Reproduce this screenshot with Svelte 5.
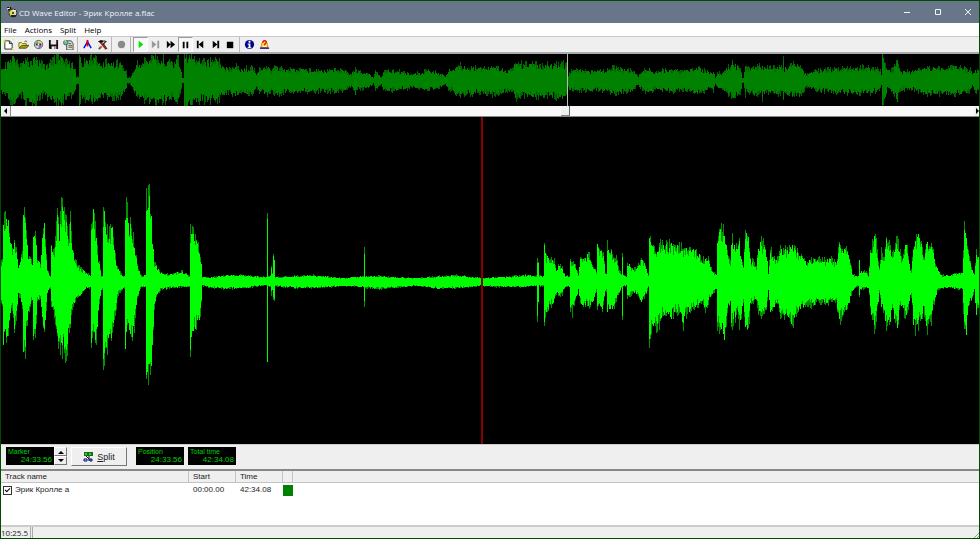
<script lang="ts">
	type Point = [x: number, up: number, down: number];

	const menus = ['File', 'Actions', 'Split', 'Help'];

	const groups = [
		[
			{ id: 'new', label: 'New' },
			{ id: 'open', label: 'Open' },
			{ id: 'cd', label: 'Read CD' },
			{ id: 'save', label: 'Save' },
			{ id: 'export', label: 'Export' }
		],
		[
			{ id: 'split', label: 'Add split' },
			{ id: 'tools', label: 'Tools' }
		],
		[{ id: 'record', label: 'Record' }],
		[
			{ id: 'play', label: 'Play' },
			{ id: 'step', label: 'Play to marker' },
			{ id: 'forward', label: 'Fast forward' },
			{ id: 'pause', label: 'Pause' },
			{ id: 'prev', label: 'Previous' },
			{ id: 'next', label: 'Next' },
			{ id: 'stop', label: 'Stop' }
		],
		[
			{ id: 'info', label: 'Info' },
			{ id: 'help', label: 'Help' }
		]
	];

	const tracks = [{ name: 'Эрик Кролле а', start: '00:00.00', time: '42:34.08' }];

	let pressed = $state(['play', 'pause']);
	let scroll = $state(577);
	let keep = $state([true]);

	// zoomed view: x, peak above the axis, peak below the axis
	const zoomed: Point[] = [
		[0, 19, 18], [2, 22, 22], [3, 58, 61], [5, 68, 60], [8, 62, 60], [9, 44, 40], [12, 34, 29], [14, 42, 46], [16, 33, 35],
		[18, 14, 14], [20, 19, 17], [22, 29, 26], [23, 64, 70], [24, 64, 78], [26, 51, 56], [28, 24, 30], [30, 24, 22], [32, 16, 20],
		[33, 43, 58], [35, 51, 55], [37, 23, 19], [40, 16, 15], [42, 43, 40], [44, 58, 50], [45, 38, 42], [47, 11, 12], [50, 5, 7],
		[51, 36, 22], [54, 31, 36], [57, 67, 70], [59, 46, 60], [61, 75, 70], [64, 70, 73], [66, 64, 75], [68, 44, 56], [70, 61, 44],
		[72, 31, 29], [75, 20, 18], [80, 13, 13], [85, 9, 7], [90, 6, 6], [91, 67, 80], [93, 70, 60], [96, 44, 60], [98, 24, 30],
		[101, 5, 8], [102, 6, 8], [103, 72, 86], [105, 68, 73], [108, 46, 65], [112, 54, 52], [115, 28, 35], [117, 14, 14],
		[122, 5, 7], [124, 5, 6], [125, 69, 72], [126, 80, 60], [127, 80, 49], [129, 54, 49], [131, 57, 60], [134, 38, 45], [137, 17, 15],
		[141, 5, 5], [145, 6, 5], [146, 96, 105], [148, 83, 90], [149, 86, 89], [151, 67, 99], [152, 44, 69], [154, 20, 29],
		[157, 14, 14], [160, 8, 8], [170, 7, 6], [182, 10, 5], [189, 5, 5], [190, 51, 74], [192, 60, 56], [194, 44, 48], [197, 41, 44],
		[200, 24, 34], [201, 21, 22], [202, 4, 4], [212, 4, 6], [226, 6, 7], [245, 6, 6], [266, 4, 3], [267, 68, 88], [268, 5, 5],
		[270, 6, 5], [271, 16, 12], [272, 8, 9], [273, 27, 17], [274, 25, 17], [275, 4, 4], [295, 5, 6], [312, 6, 6], [345, 3, 4],
		[363, 5, 5], [364, 31, 22], [365, 5, 6], [380, 5, 7], [390, 4, 6], [417, 3, 4], [440, 5, 7], [455, 6, 6], [482, 3, 4], [500, 4, 5],
		[525, 6, 5], [536, 5, 4], [537, 23, 40], [538, 18, 25], [539, 5, 4], [543, 5, 4], [544, 38, 45], [546, 25, 30], [548, 28, 27],
		[551, 21, 23], [554, 23, 21], [556, 13, 12], [558, 16, 13], [562, 14, 13], [565, 5, 5], [569, 5, 5], [570, 21, 33], [573, 20, 30],
		[576, 13, 16], [578, 6, 8], [580, 22, 23], [584, 22, 22], [588, 30, 25], [592, 20, 22], [596, 9, 9], [597, 37, 30], [599, 33, 26],
		[601, 30, 28], [603, 28, 27], [605, 9, 10], [606, 8, 9], [607, 38, 30], [610, 32, 28], [613, 25, 26], [616, 23, 20], [618, 13, 12],
		[621, 7, 6], [622, 26, 33], [623, 6, 5], [626, 5, 4], [627, 20, 16], [632, 12, 12], [637, 14, 12], [641, 23, 20], [645, 17, 14],
		[648, 5, 5], [649, 47, 57], [650, 46, 56], [652, 38, 46], [655, 35, 44], [658, 34, 45], [661, 40, 36], [666, 37, 34], [671, 38, 36],
		[676, 34, 30], [680, 37, 30], [683, 32, 44], [687, 32, 30], [692, 35, 28], [697, 29, 24], [702, 22, 20], [705, 24, 30],
		[708, 22, 20], [712, 10, 12], [716, 6, 7], [717, 45, 44], [719, 52, 45], [722, 55, 50], [724, 45, 58], [727, 30, 30],
		[730, 20, 22], [731, 46, 45], [734, 35, 40], [737, 32, 28], [739, 48, 44], [740, 25, 43], [743, 15, 20], [745, 49, 44],
		[748, 43, 48], [750, 22, 25], [754, 20, 18], [756, 14, 18], [758, 33, 30], [761, 40, 33], [765, 35, 33], [767, 22, 20],
		[768, 8, 8], [770, 34, 31], [773, 22, 25], [778, 22, 22], [780, 39, 40], [782, 25, 28], [784, 32, 34], [788, 30, 36],
		[790, 43, 40], [793, 34, 44], [797, 29, 31], [802, 25, 25], [806, 20, 22], [812, 22, 24], [818, 22, 20], [824, 21, 21],
		[830, 22, 21], [836, 18, 20], [839, 38, 40], [842, 30, 34], [845, 33, 32], [848, 28, 26], [850, 20, 15], [852, 7, 10],
		[856, 5, 5], [858, 5, 4], [859, 21, 16], [860, 8, 8], [861, 10, 7], [866, 9, 6], [868, 5, 6], [870, 30, 26], [872, 37, 40], [875, 48, 48],
		[877, 30, 30], [879, 12, 10], [881, 30, 25], [884, 22, 32], [886, 43, 43], [889, 40, 43], [892, 28, 30], [894, 30, 36],
		[897, 43, 46], [900, 30, 26], [902, 22, 25], [905, 38, 35], [907, 35, 30], [910, 12, 15], [911, 10, 15], [913, 40, 45],
		[915, 42, 47], [918, 48, 43], [921, 40, 36], [923, 22, 28], [926, 40, 46], [930, 37, 45], [933, 30, 25], [935, 20, 15],
		[938, 10, 8], [942, 6, 6], [950, 6, 6], [957, 8, 7], [962, 8, 7], [963, 30, 30], [964, 54, 50], [966, 45, 54], [968, 28, 26],
		[971, 14, 18], [974, 6, 8], [976, 28, 32], [979, 25, 20]
	];

	// whole file: x, peak on either side of the axis
	const whole: Point[] = [
		[0, 8], [3, 14], [8, 18], [14, 24], [18, 15], [20, 13], [25, 20], [30, 19], [34, 21], [40, 18], [44, 13], [50, 18], [58, 23],
		[65, 18], [72, 14], [75, 9], [76, 3], [78, 3], [79, 26], [81, 17], [88, 21], [96, 20], [101, 14], [106, 17], [112, 16],
		[120, 16], [126, 8], [127, 2], [130, 3], [133, 8], [137, 16], [145, 18], [152, 23], [158, 20], [165, 20], [172, 17],
		[178, 20], [181, 8], [182, 2], [183, 2], [184, 24], [190, 23], [196, 19], [202, 20], [208, 18], [216, 21], [222, 14],
		[228, 11], [235, 14], [243, 11], [252, 13], [256, 6], [260, 11], [268, 13], [271, 9], [275, 13], [282, 12], [290, 10],
		[300, 11], [310, 10], [318, 10], [325, 10], [335, 11], [345, 9], [351, 5], [354, 11], [355, 14], [356, 9], [365, 7],
		[371, 5], [373, 2], [375, 8], [381, 3], [383, 9], [395, 9], [405, 8], [412, 6], [418, 7], [425, 9], [435, 8], [445, 4],
		[449, 10], [452, 8], [456, 14], [465, 13], [475, 12], [485, 12], [492, 13], [500, 12], [505, 10], [512, 10], [514, 17],
		[525, 15], [540, 15], [550, 15], [560, 16], [566, 16], [567, 1], [569, 8], [575, 10], [585, 10], [595, 9], [605, 10],
		[613, 12], [620, 11], [630, 10], [635, 7], [638, 4], [642, 9], [650, 11], [655, 7], [662, 10], [672, 10], [680, 9],
		[690, 10], [700, 12], [706, 9], [710, 6], [713, 10], [715, 2], [717, 7], [722, 7], [728, 13], [733, 16], [740, 12],
		[742, 2], [743, 2], [745, 13], [750, 11], [756, 13], [761, 13], [762, 19], [763, 12], [782, 12], [783, 20], [784, 12],
		[793, 15], [800, 14], [804, 9], [806, 5], [812, 8], [820, 10], [835, 11], [850, 12], [865, 12], [875, 11], [880, 9],
		[881, 5], [882, 26], [884, 19], [887, 9], [892, 10], [897, 19], [900, 9], [910, 8], [918, 10], [926, 12], [936, 12],
		[945, 12], [950, 13], [962, 12], [970, 10], [972, 5], [975, 10], [979, 11]
	].map(([x, peak]) => [x, peak, peak]);

	function noise(n: number) {
		const v = Math.sin(n * 12.9898) * 43758.5453;
		return v - Math.floor(v);
	}

	// one vertical bar per sample column, each cut by up to `depth` of its height
	function bars(points: Point[], seed: number, gain: number, depth: number) {
		let d = '';
		let i = 0;
		for (let x = 1; x < 979; x++) {
			while (i < points.length - 2 && points[i + 1][0] <= x) i++;
			const [x0, up0, down0] = points[i];
			const [x1, up1, down1] = points[i + 1];
			const t = (x - x0) / (x1 - x0);
			const up = (up0 + (up1 - up0) * t) * (gain - depth * noise(x + seed));
			const down = (down0 + (down1 - down0) * t) * (gain - depth * noise(x + seed + 500));
			d += `M${x}.5 ${-Math.round(up)}V${Math.round(down) + 1}`;
		}
		return d;
	}

	function toggle(id: string) {
		pressed = pressed.includes(id) ? pressed.filter((p) => p !== id) : [...pressed, id];
	}
</script>

{#snippet icon(id: string)}
	<svg viewBox="0 0 12 12" aria-hidden="true">
		{#if id === 'new'}
			<path d="M2 2h5l3 3v6H2z" fill="#fff" stroke="#222" />
			<path d="M7 2v3h3" fill="none" stroke="#222" />
			<path d="M0 1l2 2M3 0v2M0 4h2M10 1l2-1M10 10l2 2" stroke="#ee0" />
		{:else if id === 'open'}
			<path d="M1 9V4h3l1 1h4v2" fill="#f5f078" stroke="#77720a" />
			<path d="M1 10l3-3h8l-3 3z" fill="#a6a01c" stroke="#4d4a00" />
			<path d="M7 3q2-2 3 0" fill="none" stroke="#555" />
		{:else if id === 'cd'}
			<circle cx="6" cy="6" r="4.5" fill="#ddd" stroke="#555" />
			<path d="M2 5q2-3 4-3v3z" fill="#59c659" />
			<path d="M10 7q-1 3-4 3V7z" fill="#9a67d2" />
			<path d="M6 2q3 0 4 3L7 6z" fill="#e6d85c" />
			<path d="M3 6h6" stroke="#222" stroke-width="2" />
			<circle cx="6" cy="6" r="1" fill="#fff" />
		{:else if id === 'save'}
			<path d="M1 1h10v10H2l-1-1z" fill="#111" />
			<path d="M3 1h6v5H3z" fill="#e8e8e8" />
			<path d="M4 8h5v3H4z" fill="#eee" />
			<path d="M7 8h1v3H7zM10 2h1v1h-1z" fill="#a22" />
		{:else if id === 'export'}
			<path d="M4 2h5l2 3v7H4z" fill="#ddd" stroke="#444" />
			<circle cx="3" cy="4" r="2.5" fill="#3ac6c6" stroke="#666" />
			<path d="M1 2l2-1 1 3z" fill="#ed3" />
			<path d="M6 5h3M6 7h4M6 9h4" stroke="#575733" />
			<circle cx="8" cy="8" r="1" fill="#aa3" />
		{:else if id === 'split'}
			<path d="M2 10l4-7 4 7" fill="none" stroke="#0000f0" stroke-width="1.5" />
			<path d="M6 1v7" stroke="#e00000" stroke-width="2" />
		{:else if id === 'tools'}
			<path d="M1 3l3-2 4 1-3 3z" fill="#111" />
			<path d="M4 4l6 7" stroke="#c01818" stroke-width="2" />
			<path d="M8 1l3 2-2 1-2 3-1-1 2-3z" fill="#333" />
			<path d="M2 11l3-3" stroke="#555" stroke-width="2" />
			<path d="M7 5l4 6" stroke="#111" />
			<path d="M2 7l2 2" stroke="#e0d020" />
		{:else if id === 'record'}
			<circle cx="6" cy="6" r="4" fill="#8a8a8a" />
		{:else if id === 'play'}
			<path d="M4 2l5 4-5 4z" fill="#00e400" />
		{:else if id === 'step'}
			<path d="M2 2l5 4-5 4zM8 2h2v8H8z" fill="#999" />
		{:else if id === 'forward'}
			<path d="M2 2l4 4-4 4zM6 2l5 4-5 4z" />
		{:else if id === 'pause'}
			<path d="M3 3h2v7H3zM7 3h2v7H7z" />
		{:else if id === 'prev'}
			<path d="M2 2h2v8H2zM9 2v8L4 6z" />
		{:else if id === 'next'}
			<path d="M8 2h2v8H8zM3 2l5 4-5 4z" />
		{:else if id === 'stop'}
			<path d="M2 3h7v7H2z" />
		{:else if id === 'info'}
			<circle cx="6" cy="6" r="5" fill="#00008b" />
			<path d="M5 2h2v2H5zM4 5h3v4h1v1H4V9h1V6H4z" fill="#fff" />
		{:else if id === 'help'}
			<path d="M2 9q1-1 1-4 1-3 3-3t3 3q0 3 1 4z" fill="#ffe84a" stroke="#d08000" />
			<path d="M1 10h10" stroke="#101090" stroke-width="1.5" />
			<path d="M4 4q1-3 3-2t0 3L6 6v1" fill="none" stroke="#e01010" stroke-width="1.5" />
			<path d="M4 8h4" stroke="#fff" />
		{/if}
	</svg>
{/snippet}

<div class="window">
	<header class="titlebar">
		<svg class="logo" viewBox="0 0 12 12" aria-hidden="true">
			<path d="M1 1h4l1 4-3 1z" fill="#151515" />
			<circle cx="7" cy="7" r="4" fill="#d9d9ac" stroke="#333" />
			<path d="M3 6l4-2 1 3-3 3z" fill="#e6df28" />
			<path d="M5 9h5v2H5z" fill="#222" />
			<circle cx="7" cy="7" r="1" fill="#222" />
			<path d="M1 3l3-1M7 4l3 1" stroke="#fff" />
		</svg>
		<h1>CD Wave Editor - Эрик Кролле a.flac</h1>
		<div class="caption">
			<button type="button" aria-label="Minimize"><svg viewBox="0 0 8 8"><path d="M1 4.5h6" /></svg></button>
			<button type="button" aria-label="Maximize"><svg viewBox="0 0 8 8"><path d="M1.5 1.5h5v5h-5z" /></svg></button>
			<button type="button" aria-label="Close"><svg viewBox="0 0 8 8"><path d="M1 1l6 6M7 1L1 7" /></svg></button>
		</div>
	</header>

	<nav class="menu">
		{#each menus as menu (menu)}
			<button type="button">{menu}</button>
		{/each}
	</nav>

	<div class="toolbar" role="toolbar" aria-label="Main">
		{#each groups as group, i (i)}
			<div class="group">
				{#each group as tool (tool.id)}
					<button
						type="button"
						class:pressed={pressed.includes(tool.id)}
						aria-label={tool.label}
						title={tool.label}
						onclick={() => toggle(tool.id)}
					>
						{@render icon(tool.id)}
					</button>
				{/each}
			</div>
		{/each}
	</div>

	<svg class="overview" viewBox="1 -26 978 52" preserveAspectRatio="none" role="img" aria-label="Whole recording">
		<path d={bars(whole, 7, 1.3, 0.7)} stroke="#006400" />
		<path d={bars(whole, 90, 1.1, 0.45)} stroke="#008200" />
		<path d="M567.5 -26V26" stroke="#b8b8b8" />
	</svg>

	<div class="scrollbar">
		<button type="button" aria-label="Scroll left"><svg viewBox="0 0 8 8"><path d="M5 1v6L2 4z" /></svg></button>
		<input type="range" min="0" max="1000" bind:value={scroll} aria-label="Position in recording" />
		<button type="button" aria-label="Scroll right"><svg viewBox="0 0 8 8"><path d="M3 1v6l3-3z" /></svg></button>
	</div>

	<div class="wave">
		<svg viewBox="1 -164 978 327" preserveAspectRatio="none" role="img" aria-label="Zoomed waveform">
			<path d={bars(zoomed, 3, 1.16, 0.4)} stroke="#009000" />
			<path d={bars(zoomed, 40, 1.03, 0.33)} stroke="#00ff00" />
			<rect x="481" y="-164" width="2" height="327" fill="#880000" />
		</svg>
	</div>

	<div class="controls">
		<div class="spin">
			<div class="readout"><span>Marker</span><output>24:33.56</output></div>
			<div class="arrows">
				<button type="button" aria-label="Marker forward"><svg viewBox="0 0 6 4"><path d="M0 4h6L3 1z" /></svg></button>
				<button type="button" aria-label="Marker back"><svg viewBox="0 0 6 4"><path d="M0 0h6L3 3z" /></svg></button>
			</div>
		</div>
		<button type="button" class="split">
			<svg viewBox="0 0 10 10" aria-hidden="true">
				<path d="M1 0h9v4H1z" fill="#087808" />
				<path d="M2 2h2M6 2h2" stroke="#8f8" />
				<path d="M3 4l4 4M6 4v5" stroke="#111" />
				<path d="M1 7h3v2H1zM7 7h2v2H7z" fill="none" stroke="#000090" />
			</svg>
			<span><u>S</u>plit</span>
		</button>
		<div class="readout"><span>Position</span><output>24:33.56</output></div>
		<div class="readout"><span>Total time</span><output>42:34.08</output></div>
	</div>

	<div class="tracks">
		<table>
			<colgroup>
				<col class="name" />
				<col class="time" />
				<col class="time" />
				<col class="mark" />
				<col />
			</colgroup>
			<thead>
				<tr><th>Track name</th><th>Start</th><th>Time</th><th></th><th></th></tr>
			</thead>
			<tbody>
				{#each tracks as track, i (i)}
					<tr>
						<td><label><input type="checkbox" bind:checked={keep[i]} />{track.name}</label></td>
						<td>{track.start}</td>
						<td>{track.time}</td>
						<td class="swatch"><i></i></td>
						<td></td>
					</tr>
				{/each}
			</tbody>
		</table>
	</div>

	<footer class="status">
		<span>10:25.5</span>
		<div class="pane"></div>
		<svg viewBox="0 0 6 6" aria-hidden="true"><path d="M1 6l5-5M4 6l2-2" /></svg>
	</footer>
</div>

<style>
	:global(body) {
		margin: 0;
	}

	.window {
		box-sizing: border-box;
		min-height: 100vh;
		display: flex;
		flex-direction: column;
		border: 1px solid #004b00;
		background: #efefef;
		color: #222;
		font-family: 'Liberation Sans', Arial, sans-serif;
		font-size: 8px;
	}

	button {
		display: flex;
		align-items: center;
		justify-content: center;
		margin: 0;
		padding: 0;
		border: none;
		background: none;
		color: inherit;
		font: inherit;
	}

	svg {
		display: block;
	}

	.titlebar {
		display: flex;
		align-items: center;
		gap: 1px;
		height: 22px;
		padding-left: 5px;
		background: #68768a;
		color: #f2f4f7;
	}

	.logo {
		width: 12px;
		height: 12px;
	}

	h1 {
		margin: 0;
		font: 8px 'Open Sans', 'Noto Sans', sans-serif;
	}

	.caption {
		display: flex;
		height: 100%;
		margin-left: auto;
	}

	.caption button {
		box-sizing: border-box;
		width: 31px;
	}

	.caption button:last-child {
		width: 26px;
		padding-left: 4px;
	}

	.caption svg {
		width: 8px;
		height: 8px;
		fill: none;
		stroke: #f2f4f7;
	}

	.menu {
		display: flex;
		gap: 8px;
		height: 13px;
		padding-left: 3px;
		background: #fff;
		border-bottom: 1px solid #c8c8c8;
		font: 8px 'Open Sans', 'Noto Sans', sans-serif;
		color: #000;
	}

	.toolbar {
		display: flex;
		height: 15px;
		border-bottom: 2px solid #aaa;
	}

	.group {
		display: flex;
	}

	.group + .group {
		margin-left: 1px;
		padding-left: 2px;
		border-left: 1px solid #b8b8b8;
	}

	.group button {
		box-sizing: border-box;
		width: 15px;
		border: 1px solid transparent;
	}

	.group button.pressed {
		background: #f8f8f8;
		border-color: #999 #fff #fff #999;
	}

	.group svg {
		flex: none;
		width: 11px;
		height: 11px;
	}

	.overview {
		width: 100%;
		height: 52px;
		background: #000;
	}

	.scrollbar {
		display: flex;
		height: 10px;
		background: #f8f8f8;
		border-bottom: 1px solid #888;
	}

	.scrollbar button {
		width: 10px;
		background: #efefef;
		border-right: 1px solid #888;
	}

	.scrollbar button:last-child {
		width: 5px;
		border-right: none;
	}

	.scrollbar svg {
		flex: none;
		width: 8px;
		height: 8px;
	}

	.scrollbar input {
		flex: 1;
		min-width: 0;
		height: 10px;
		margin: 0;
		appearance: none;
		background: transparent;
	}

	.scrollbar input::-webkit-slider-thumb {
		appearance: none;
		box-sizing: border-box;
		width: 9px;
		height: 10px;
		background: #efefef;
		border-right: 1px solid #666;
		border-bottom: 1px solid #888;
	}

	.wave {
		flex: 1;
		display: grid;
		min-height: 120px;
		background: #000;
	}

	.wave svg {
		width: 100%;
		height: 100%;
		min-height: 0;
	}

	.controls {
		display: flex;
		align-items: flex-start;
		gap: 4px;
		height: 22px;
		padding: 2px 5px 0;
		border-top: 1px solid #ccc;
		border-bottom: 2px solid #888;
	}

	.spin {
		display: flex;
	}

	.readout {
		display: flex;
		flex-direction: column;
		width: 44px;
		height: 18px;
		padding: 0 2px;
		background: #000;
		color: #00d000;
		line-height: 9px;
	}

	.readout span {
		font-size: 7px;
	}

	.readout output {
		text-align: right;
		line-height: 7px;
	}

	.arrows {
		display: flex;
		flex-direction: column;
	}

	.arrows button {
		box-sizing: border-box;
		width: 13px;
		height: 9px;
		border: 1px solid;
		border-color: #fff #777 #777 #fff;
	}

	.arrows svg {
		width: 6px;
		height: 4px;
	}

	.split {
		box-sizing: border-box;
		width: 56px;
		height: 19px;
		margin-right: 5px;
		gap: 4px;
		border: 1px solid;
		border-color: #fff #777 #777 #fff;
		font-size: 9px;
	}

	.split svg {
		width: 10px;
		height: 10px;
	}

	.tracks {
		height: 54px;
		background: #fff;
		border-bottom: 2px solid #ccc;
	}

	table {
		width: 100%;
		border-collapse: separate;
		border-spacing: 0;
		table-layout: fixed;
	}

	.name {
		width: 188px;
	}

	.time {
		width: 47px;
	}

	.mark {
		width: 10px;
	}

	th {
		height: 11px;
		padding: 0 4px;
		background: #efefef;
		border-right: 1px solid #c4c4c4;
		border-bottom: 1px solid #c4c4c4;
		font-weight: normal;
		text-align: left;
		line-height: 11px;
	}

	th:nth-child(4),
	th:last-child {
		padding: 0;
	}

	th:last-child {
		border-right: none;
	}

	td {
		height: 14px;
		padding: 0 4px;
		line-height: 14px;
	}

	td:first-child {
		padding: 0 2px;
	}

	td.swatch {
		padding: 0;
	}

	.swatch i {
		display: block;
		height: 11px;
		background: #008000;
	}

	label {
		display: flex;
		align-items: center;
		gap: 3px;
	}

	input[type='checkbox'] {
		appearance: none;
		display: grid;
		place-items: center;
		box-sizing: border-box;
		width: 9px;
		height: 9px;
		margin: 0;
		border: 1px solid #333;
		background: #fff;
	}

	input[type='checkbox']:checked::before {
		content: '';
		width: 4px;
		height: 2px;
		margin-bottom: 2px;
		border-left: 1px solid #000;
		border-bottom: 1px solid #000;
		transform: rotate(-45deg);
	}

	.status {
		display: flex;
		align-items: stretch;
		height: 11px;
		color: #222;
		font: 8px 'Open Sans', 'Noto Sans', sans-serif;
	}

	.status span {
		width: 29px;
		border-right: 1px solid #aaa;
	}

	.pane {
		flex: 1;
		margin-left: 1px;
		border-left: 1px solid #aaa;
	}

	.status svg {
		align-self: flex-end;
		width: 6px;
		height: 6px;
		stroke: #999;
		fill: none;
	}
</style>
